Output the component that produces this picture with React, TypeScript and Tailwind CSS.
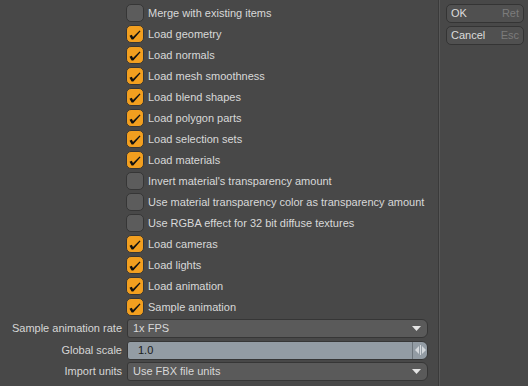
const options: { label: string; checked: boolean }[] = [
  { label: 'Merge with existing items', checked: false },
  { label: 'Load geometry', checked: true },
  { label: 'Load normals', checked: true },
  { label: 'Load mesh smoothness', checked: true },
  { label: 'Load blend shapes', checked: true },
  { label: 'Load polygon parts', checked: true },
  { label: 'Load selection sets', checked: true },
  { label: 'Load materials', checked: true },
  { label: "Invert material's transparency amount", checked: false },
  { label: 'Use material transparency color as transparency amount', checked: false },
  { label: 'Use RGBA effect for 32 bit diffuse textures', checked: false },
  { label: 'Load cameras', checked: true },
  { label: 'Load lights', checked: true },
  { label: 'Load animation', checked: true },
  { label: 'Sample animation', checked: true }
];

function CheckBox({ checked }: { checked: boolean }) {
  return (
    <div
      className={`flex h-[18px] w-[18px] shrink-0 items-center justify-center rounded-[5px] border border-[#363636] ${
        checked ? 'bg-[#f29f1f]' : 'bg-[#5c5c5c]'
      }`}
    >
      {checked && (
        <svg width="12" height="10" viewBox="0 0 12 10" className="mt-[1px]">
          <polygon points="0.5,5.8 2.8,4.8 4,7 10.6,0.4 11.5,1.3 4.3,9.6 2.6,9.6" fill="#111" />
        </svg>
      )}
    </div>
  );
}

function Arrow() {
  return (
    <svg width="9" height="6" viewBox="0 0 9 6" className="mr-[6px]">
      <polygon points="0,0 9,0 4.5,5" fill="#e4e4e4" />
    </svg>
  );
}

function FieldRow({ label, children }: { label: string; children: React.ReactNode }) {
  return (
    <div className="flex h-[19px] items-center">
      <div className="w-[127px] shrink-0 pr-[5px] text-right text-[#d6d6d6]">{label}</div>
      <div className="h-[19px] w-[301px]">{children}</div>
    </div>
  );
}

export default function App() {
  return (
    <div
      className="flex h-[386px] w-[528px] bg-[#484848] text-[11px] leading-none text-[#d8d8d8]"
      style={{ fontFamily: '"Liberation Sans", Arial, sans-serif' }}
    >
      <div className="flex w-[439px] shrink-0 flex-col border-r border-[#3a3a3a] pt-[4px]">
        <div className="flex flex-col gap-[3px] pl-[126px]">
          {options.map(o => (
            <div key={o.label} className="flex h-[18px] items-center gap-[4px]">
              <CheckBox checked={o.checked} />
              <span>{o.label}</span>
            </div>
          ))}
        </div>
        <div className="mt-[3px] flex flex-col gap-[2.5px]">
          <FieldRow label="Sample animation rate">
            <div className="flex h-full items-center justify-between rounded-l-[3px] rounded-r-[6px] border border-[#363636] bg-[#5a5a5a] pl-[5px]">
              <span>1x FPS</span>
              <Arrow />
            </div>
          </FieldRow>
          <FieldRow label="Global scale">
            <div className="flex h-full items-stretch overflow-hidden rounded-l-[3px] rounded-r-[6px] border border-[#363636] bg-[#939ca4]">
              <div className="flex flex-1 items-center pl-[10px] text-[#1a1a1a]">1.0</div>
              <div className="flex w-[15px] items-center justify-center border-l border-[#6c747b]">
                <svg width="11" height="10" viewBox="0 0 11 10">
                  <polygon points="0,5 4,1 4,9" fill="#d4d8dc" />
                  <rect x="5" y="0" width="1" height="10" fill="#d4d8dc" />
                  <polygon points="11,5 7,1 7,9" fill="#d4d8dc" />
                </svg>
              </div>
            </div>
          </FieldRow>
          <FieldRow label="Import units">
            <div className="flex h-full items-center justify-between rounded-l-[3px] rounded-r-[6px] border border-[#363636] bg-[#5a5a5a] pl-[5px]">
              <span>Use FBX file units</span>
              <Arrow />
            </div>
          </FieldRow>
        </div>
      </div>
      <div className="flex flex-1 flex-col gap-[3px] border-l border-[#575757] pl-[6px] pr-[4px] pt-[4px]">
        <button className="flex h-[19px] items-center justify-between rounded-[5px] border border-[#343434] bg-[#505050] px-[4px] text-[#dcdcdc]">
          <span>OK</span>
          <span className="text-[#7c7c7c]">Ret</span>
        </button>
        <button className="flex h-[19px] items-center justify-between rounded-[5px] border border-[#343434] bg-[#505050] px-[4px] text-[#dcdcdc]">
          <span>Cancel</span>
          <span className="text-[#7c7c7c]">Esc</span>
        </button>
      </div>
    </div>
  );
}
